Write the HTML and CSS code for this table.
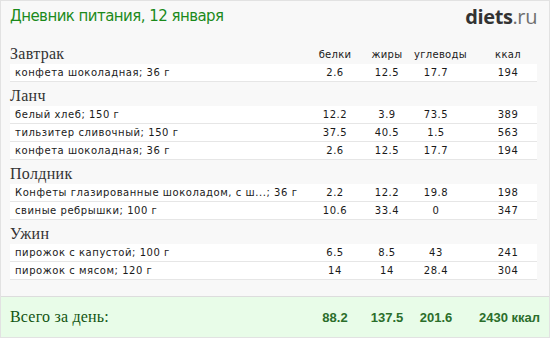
FILE: index.html
```html
<!DOCTYPE html>
<html lang="ru">
<head>
<meta charset="utf-8">
<link rel="stylesheet" href="styles.css">
</head>
<body>
<div class="panel">
  <div class="inner">
    <header class="top">
      <h1 class="title">Дневник питания, 12 января</h1>
      <div class="logo"><b>diets</b>.ru</div>
    </header>

    <section class="meal">
      <div class="meal-head">
        <span class="meal-name">Завтрак</span>
        <span class="hcol">белки</span>
        <span class="hcol">жиры</span>
        <span class="hcol">углеводы</span>
        <span class="gap"></span>
        <span class="hcol">ккал</span>
      </div>
      <div class="row"><span class="name">конфета шоколадная; 36 г</span><span class="num">2.6</span><span class="num">12.5</span><span class="num">17.7</span><span class="gap"></span><span class="num">194</span></div>
    </section>

    <section class="meal">
      <div class="meal-head"><span class="meal-name">Ланч</span></div>
      <div class="row"><span class="name">белый хлеб; 150 г</span><span class="num">12.2</span><span class="num">3.9</span><span class="num">73.5</span><span class="gap"></span><span class="num">389</span></div>
      <div class="row"><span class="name">тильзитер сливочный; 150 г</span><span class="num">37.5</span><span class="num">40.5</span><span class="num">1.5</span><span class="gap"></span><span class="num">563</span></div>
      <div class="row"><span class="name">конфета шоколадная; 36 г</span><span class="num">2.6</span><span class="num">12.5</span><span class="num">17.7</span><span class="gap"></span><span class="num">194</span></div>
    </section>

    <section class="meal">
      <div class="meal-head"><span class="meal-name">Полдник</span></div>
      <div class="row"><span class="name">Конфеты глазированные шоколадом, с ш...; 36 г</span><span class="num">2.2</span><span class="num">12.2</span><span class="num">19.8</span><span class="gap"></span><span class="num">198</span></div>
      <div class="row"><span class="name">свиные ребрышки; 100 г</span><span class="num">10.6</span><span class="num">33.4</span><span class="num">0</span><span class="gap"></span><span class="num">347</span></div>
    </section>

    <section class="meal">
      <div class="meal-head"><span class="meal-name">Ужин</span></div>
      <div class="row"><span class="name">пирожок с капустой; 100 г</span><span class="num">6.5</span><span class="num">8.5</span><span class="num">43</span><span class="gap"></span><span class="num">241</span></div>
      <div class="row"><span class="name">пирожок с мясом; 120 г</span><span class="num">14</span><span class="num">14</span><span class="num">28.4</span><span class="gap"></span><span class="num">304</span></div>
    </section>
  </div>

  <footer class="total">
    <span class="total-label">Всего за день:</span>
    <span class="tnum">88.2</span>
    <span class="tnum">137.5</span>
    <span class="tnum">201.6</span>
    <span class="gap"></span>
    <span class="tnum kcal">2430 ккал</span>
  </footer>
</div>
</body>
</html>
```

FILE: styles.css
```css
html, body {
  margin: 0;
  padding: 0;
  background: #ffffff;
}

.panel {
  box-sizing: border-box;
  width: 550px;
  height: 338px;
  border: 1px solid #e2e2e2;
  background: #f8f8f8;
  display: flex;
  flex-direction: column;
}

.inner {
  padding: 0 12px 0 9px;
  flex: 1;
}

.top {
  height: 39px;
  box-sizing: border-box;
  padding-top: 6px;
  display: flex;
  align-items: flex-start;
  justify-content: space-between;
}

.title {
  margin: 0;
  font-family: "DejaVu Sans", sans-serif;
  font-weight: normal;
  font-size: 15px;
  line-height: 18px;
  color: #1b8a1b;
  letter-spacing: -0.55px;
}

.logo {
  font-family: "Open Sans", sans-serif;
  font-size: 20px;
  line-height: 22px;
  color: #707070;
  letter-spacing: -0.4px;
  margin-top: -1px;
}

.logo b {
  color: #333333;
  font-weight: 700;
}

.meal-head,
.row,
.total {
  display: grid;
  grid-template-columns: 300px 50px 54px 44px 21px 58px;
  align-items: center;
}

.meal-head {
  height: 24px;
  align-items: end;
  padding-bottom: 1px;
  box-sizing: border-box;
}

.meal-name {
  font-family: "Liberation Serif", serif;
  font-size: 16px;
  color: #333333;
  line-height: 18px;
  letter-spacing: 0.3px;
}

.hcol {
  font-family: "DejaVu Sans", sans-serif;
  font-size: 10px;
  color: #1a1a1a;
  text-align: center;
  line-height: 14px;
  padding-bottom: 1px;
  letter-spacing: 0.3px;
}

.row {
  height: 17px;
  background: #ffffff;
  border-bottom: 1px solid #e6e6e6;
  font-family: "DejaVu Sans", sans-serif;
  font-size: 10px;
  color: #1a1a1a;
  letter-spacing: 0.55px;
}

.name {
  padding-left: 5px;
  white-space: nowrap;
}

.num {
  text-align: center;
}

.total {
  height: 41px;
  box-sizing: border-box;
  border-top: 1px solid #dddddd;
  background: #e8fce8;
  padding: 0 12px 0 9px;
}

.total-label {
  font-family: "Liberation Serif", serif;
  font-size: 16px;
  color: #125512;
  letter-spacing: 0.2px;
}

.tnum {
  font-family: "Liberation Sans", sans-serif;
  font-weight: bold;
  font-size: 13px;
  color: #2b6e2b;
  text-align: center;
  white-space: nowrap;
}

.tnum.kcal {
  text-align: right;
}
```
